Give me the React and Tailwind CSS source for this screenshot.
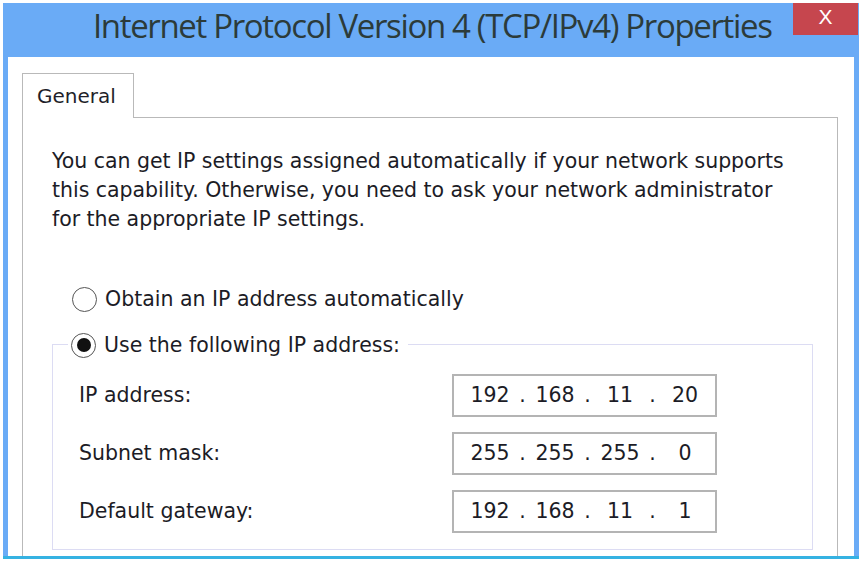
export default function App() {
  const fields = [
    { label: 'IP address:', value: ['192', '168', '11', '20'] },
    { label: 'Subnet mask:', value: ['255', '255', '255', '0'] },
    { label: 'Default gateway:', value: ['192', '168', '11', '1'] },
  ];

  return (
    <div className="w-[865px] h-[566px] bg-white overflow-hidden pt-[3px] pl-[3px]" style={{ fontFamily: '"DejaVu Sans", Verdana, sans-serif' }}>
      {/* window frame */}
      <div className="w-[856px] h-[556px] bg-[#6aabf6] flex flex-col border-b-[3px] border-[#35b2e2]">
        {/* title bar */}
        <div className="h-[54px] flex items-start relative shrink-0">
          <div
            className="absolute left-[90px] top-[1px] text-[33px] leading-[44px] text-[#2c3b3a] tracking-[-1.35px]"
            style={{ fontFamily: '"Open Sans", "Noto Sans", sans-serif' }}
          >
            Internet Protocol Version 4 (TCP/IPv4) Properties
          </div>
          <div className="absolute right-[1px] top-0 w-[65px] h-[32px] bg-[#c6464e] flex justify-center pt-[1px] text-white text-[21px] leading-[26px]" style={{ fontFamily: '"Liberation Sans", Arial, sans-serif' }}>
            X
          </div>
        </div>

        {/* client area */}
        <div className="flex-1 bg-white ml-[5px] mr-[5px] pt-[17px] pl-[14px] pr-[16px] overflow-hidden">
          {/* tab header */}
          <div className="flex items-end h-[44px]">
            <div className="w-[112px] h-[45px] border border-b-0 border-[#b9b9b9] bg-white pl-[14px] pt-[7px] text-[20px] text-[#1f1f2a] relative z-10">
              General
            </div>
            <div className="flex-1 border-b border-[#b9b9b9]" />
          </div>

          {/* tab page */}
          <div className="border border-t-0 border-[#b9b9b9] h-[460px] pl-[29px] pr-[24px] pt-[29px]">
            <p className="text-[20.5px] leading-[29px] text-[#1c1c26] whitespace-nowrap tracking-[-0.03px]">
              You can get IP settings assigned automatically if your network supports
              <br />
              this capability. Otherwise, you need to ask your network administrator
              <br />
              for the appropriate IP settings.
            </p>

            <div className="mt-[50px] ml-[20px] flex items-center h-[30px]">
              <span className="w-[25px] h-[25px] rounded-full border-[1.5px] border-[#555] bg-white shrink-0" />
              <span className="ml-[8px] text-[20.5px] text-[#1c1c26]">Obtain an IP address automatically</span>
            </div>

            {/* group box */}
            <div className="mt-[30px] border border-[#dcdcf3] relative h-[206px]">
              <div className="absolute -top-[15px] left-[15px] bg-white flex items-center h-[30px] pr-[8px] pl-[3px]">
                <span className="w-[25px] h-[25px] rounded-full border-[1.5px] border-[#555] bg-white shrink-0 flex items-center justify-center">
                  <span className="w-[14px] h-[14px] rounded-full bg-[#111]" />
                </span>
                <span className="ml-[8px] text-[20.5px] text-[#1c1c26]">Use the following IP address:</span>
              </div>

              <div className="pt-[29px] pl-[26px] flex flex-col gap-[15px]">
                {fields.map((f) => (
                  <div key={f.label} className="flex items-center">
                    <span className="w-[373px] text-[20.5px] text-[#1c1c26]">{f.label}</span>
                    <div className="w-[265px] h-[43px] border-2 border-[#b4b4b4] flex items-center pl-[14px] text-[20.5px] text-[#1c1c26]">
                      {f.value.map((v, i) => (
                        <div key={i} className="flex">
                          {i > 0 && <span className="w-[21px] text-center">.</span>}
                          <span className="w-[44px] text-center">{v}</span>
                        </div>
                      ))}
                    </div>
                  </div>
                ))}
              </div>
            </div>
          </div>
        </div>
      </div>
    </div>
  );
}
